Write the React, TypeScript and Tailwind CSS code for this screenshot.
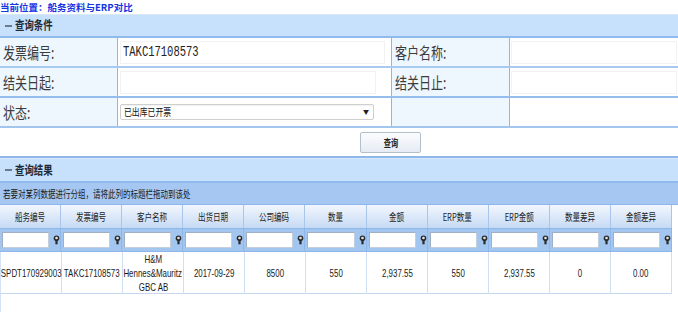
import React from "react";

const CJK = { fontFamily: '"Noto Sans CJK SC", "Noto Sans", sans-serif' };
const SANS = { fontFamily: '"Liberation Sans", "Noto Sans CJK SC", sans-serif' };
const MONO = { fontFamily: '"Liberation Mono", monospace' };

function L({ children }: { children: React.ReactNode }) {
  return <span className="inline-block whitespace-nowrap scale-x-75 origin-left">{children}</span>;
}
function C({ children }: { children: React.ReactNode }) {
  return <span className="inline-block whitespace-nowrap scale-x-[0.72] origin-center">{children}</span>;
}

function FilterIcon() {
  return (
    <svg width="7" height="10" viewBox="0 0 7 10">
      <circle cx="3.5" cy="3.2" r="2.8" fill="#2b2b2b" />
      <circle cx="3.5" cy="3" r="1.3" fill="#e6e6e6" />
      <rect x="2.4" y="5.5" width="2.2" height="3.8" fill="#2b2b2b" />
    </svg>
  );
}

const cols = ["船务编号", "发票编号", "客户名称", "出货日期", "公司编码", "数量", "金额", "ERP数量", "ERP金额", "数量差异", "金额差异"];

function SectionHeader({ title, h }: { title: string; h: string }) {
  return (
    <div className={`${h} flex items-center bg-[#c7e0fc] border-t border-[#d9e8f8] border-b-2 border-b-[#90b9ec] pl-[5px]`} style={CJK}>
      <span className="w-[7px] h-[2px] bg-[#6a7b90] mr-[3px]"></span>
      <span className="text-[12.5px] font-bold text-[#1f2a36] leading-none">
        <L>{title}</L>
      </span>
    </div>
  );
}

function Label({ text }: { text: string }) {
  return (
    <div className="w-[118px] shrink-0 h-full bg-[#eef6fe] border-r border-[#8db7ec] flex items-center pl-[3px] text-[16px] text-[#3c3c3c]" style={CJK}>
      <L>{text}</L>
    </div>
  );
}

export default function App() {
  return (
    <div className="w-[678px] h-[312px] bg-white overflow-hidden">
      <div className="h-[14px] flex items-center text-[9.5px] font-bold text-[#1636e4] leading-[14px] whitespace-nowrap" style={CJK}>
        当前位置：船务资料与ERP对比
      </div>
      <SectionHeader title="查询条件" h="h-[24px]" />
      {/* row 1 */}
      <div className="h-[30px] flex border-b-2 border-[#a9caf0]">
        <Label text="发票编号:" />
        <div className="w-[274px] shrink-0 h-full border-r border-[#8db7ec] flex items-center pl-[2px]">
          <div className="w-[265px] h-[23px] border border-[#f2f2f2] flex items-center pl-[2px] text-[14px] text-[#222]" style={MONO}>
            <L>TAKC17108573</L>
          </div>
        </div>
        <Label text="客户名称:" />
        <div className="flex-1 h-full flex items-center pl-[1px]">
          <div className="w-[166px] h-[23px] border border-[#f2f2f2]"></div>
        </div>
      </div>
      {/* row 2 */}
      <div className="h-[30px] flex border-b-2 border-[#94bcec]">
        <Label text="结关日起:" />
        <div className="w-[274px] shrink-0 h-full border-r border-[#8db7ec] flex items-center pl-[2px]">
          <div className="w-[256px] h-[23px] border border-[#f2f2f2]"></div>
        </div>
        <Label text="结关日止:" />
        <div className="flex-1 h-full flex items-center pl-[1px]">
          <div className="w-[166px] h-[23px] border border-[#f2f2f2]"></div>
        </div>
      </div>
      {/* row 3 */}
      <div className="h-[30px] flex border-b-2 border-[#a3c6ef]">
        <Label text="状态:" />
        <div className="w-[274px] shrink-0 h-full border-r border-[#8db7ec] flex items-center pl-[2px]">
          <div className="w-[254px] h-[16px] border border-[#cfcfcf] rounded-[2px] flex items-center justify-between pl-[3px] pr-[4px] text-[10.5px] text-[#111] shadow-[inset_0_1px_1px_rgba(0,0,0,0.06)]" style={CJK}>
            <L>已出库已开票</L>
            <span className="text-[6px] text-[#222] leading-none">▼</span>
          </div>
        </div>
        <div className="w-[118px] shrink-0 h-full bg-[#eef6fe] border-r border-[#8db7ec]"></div>
        <div className="flex-1 h-full"></div>
      </div>
      {/* button row */}
      <div className="h-[30px] flex items-center border-b-2 border-[#8fb8ea] pl-[360px]">
        <button className="w-[61px] h-[21px] border border-[#b4bfcc] rounded-[2px] bg-gradient-to-b from-[#fbfcfe] to-[#e6ecf5] flex items-center justify-center text-[10px] font-bold text-[#222]" style={CJK}>
          <C>查询</C>
        </button>
      </div>
      <SectionHeader title="查询结果" h="h-[25px]" />
      <div className="h-[22px] flex items-center bg-[#a5c7f2] border-b border-[#8fb6e9] pl-[3px] text-[10px] text-[#1a1a1a]" style={CJK}>
        <L>若要对某列数据进行分组，请将此列的标题栏拖动到该处</L>
      </div>
      <div className="w-[672px]">
        <div className="grid grid-cols-11 h-[24px] border-b border-[#8fb6e9]">
          {cols.map((c) => (
            <div key={c} className="flex items-center justify-center bg-gradient-to-b from-[#f2f7fd] to-[#c6daf4] border-r border-[#a9c6ea] text-[10.5px] text-[#1e1e1e]" style={CJK}>
              <C>{c}</C>
            </div>
          ))}
        </div>
        <div className="grid grid-cols-11 h-[23px] bg-[#a3c6f0] border-b border-[#8fb6e9]">
          {cols.map((c) => (
            <div key={c} className="flex items-center pl-[2px] border-r border-[#8fb6e9]">
              <div className="w-[48px] h-[16px] bg-white border border-[#c3cfdc] border-t-[#9fb0c4] border-l-[#9fb0c4]"></div>
              <div className="ml-[4px] flex items-center">
                <FilterIcon />
              </div>
            </div>
          ))}
        </div>
        <div className="grid grid-cols-11 h-[42px] border-b border-[#c6d7ef] border-l border-l-[#d4e2f4]" style={SANS}>
          {["SPDT170929003", "TAKC17108573", "", "2017-09-29", "8500", "550", "2,937.55", "550", "2,937.55", "0", "0.00"].map((v, i) => (
            <div key={i} className="flex flex-col items-center justify-center border-r border-[#d0def2] text-[11px] text-[#1a1a1a] leading-[14px]">
              {i === 2 ? (
                <>
                  <C>H&amp;M</C>
                  <C>Hennes&amp;Mauritz</C>
                  <C>GBC AB</C>
                </>
              ) : (
                <C>{v}</C>
              )}
            </div>
          ))}
        </div>
        <div className="h-[20px] border-l border-[#d4e2f4]"></div>
      </div>
    </div>
  );
}
